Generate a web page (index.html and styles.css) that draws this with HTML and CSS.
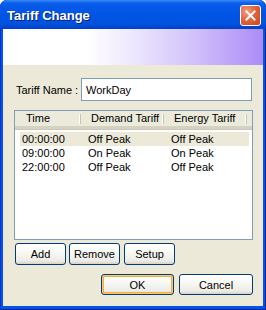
FILE: index.html
```html
<!DOCTYPE html>
<html lang="en">
<head>
  <meta charset="UTF-8" />
  <title>Tariff Change</title>
  <link rel="stylesheet" href="styles.css">
</head>
<body>
  <div class="window">
    <div class="titlebar">
      <span class="title">Tariff Change</span>
      <button class="close" aria-label="Close">
        <svg width="11" height="11" viewBox="0 0 11 11">
          <path d="M1.5 1.5 L9.5 9.5 M9.5 1.5 L1.5 9.5" stroke="#fff" stroke-width="2" stroke-linecap="square" fill="none"/>
        </svg>
      </button>
    </div>

    <div class="client">
      <div class="banner"></div>

      <div class="content">
        <div class="name-row">
          <label for="tariffName">Tariff Name :</label>
          <input type="text" id="tariffName" value="WorkDay" />
        </div>

        <div class="listview">
          <div class="lv-header">
            <div class="lv-col c1">Time</div>
            <div class="lv-col c2">Demand Tariff</div>
            <div class="lv-col c3">Energy Tariff</div>
          </div>
          <div class="lv-rows">
            <div class="lv-row selected">
              <span class="c1">00:00:00</span><span class="c2">Off Peak</span><span class="c3">Off Peak</span>
            </div>
            <div class="lv-row">
              <span class="c1">09:00:00</span><span class="c2">On Peak</span><span class="c3">On Peak</span>
            </div>
            <div class="lv-row">
              <span class="c1">22:00:00</span><span class="c2">Off Peak</span><span class="c3">Off Peak</span>
            </div>
          </div>
        </div>

        <div class="list-buttons">
          <button class="btn small">Add</button>
          <button class="btn small">Remove</button>
          <button class="btn small">Setup</button>
        </div>

        <div class="dialog-buttons">
          <button class="btn default">OK</button>
          <button class="btn cancel">Cancel</button>
        </div>
      </div>
    </div>
  </div>
</body>
</html>
```

FILE: styles.css
```css
body {
  margin: 0;
  padding: 0;
  font-family: 'Liberation Sans', Arial, sans-serif;
  font-size: 11px;
  color: #000;
  background: #fff;
}

.window {
  width: 266px;
  height: 310px;
  box-sizing: border-box;
  display: flex;
  flex-direction: column;
  background: #0553E2;
  border-radius: 7px 7px 0 0;
  overflow: hidden;
  box-shadow: inset 1px 0 0 #0831D9, inset -1px 0 0 #001EA0, inset 0 -1px 0 #001EA0;
}

.titlebar {
  height: 29px;
  flex: none;
  display: flex;
  align-items: center;
  justify-content: space-between;
  padding: 0 5px 0 7px;
  background: linear-gradient(#3B8AF7 0px, #0B5FEB 3px, #0558E8 8px, #0054E3 16px, #0152DE 24px, #0140C8 29px);
  border-radius: 7px 7px 0 0;
}

.title {
  color: #fff;
  font-weight: bold;
  font-size: 13px;
  text-shadow: 1px 1px 0 #0A1E7A;
  margin-top: 1px;
}

.close {
  width: 21px;
  height: 21px;
  padding: 0;
  margin-top: 1px;
  border: 1px solid #fff;
  border-radius: 3px;
  background: radial-gradient(circle at 30% 30%, #F29C7C 0%, #E2653F 45%, #CD4419 100%);
  display: flex;
  align-items: center;
  justify-content: center;
}

.client {
  flex: 1;
  margin: 0 3px 4px;
  background: #ECE9D8;
  display: flex;
  flex-direction: column;
}

.banner {
  height: 36px;
  flex: none;
  background: linear-gradient(to right, #fff 0%, #fff 32%, #EDE7FD 50%, #D3C4FA 72%, #AC8CF6 100%);
}

.content {
  padding: 13px 10px 0 11px;
}

.name-row {
  display: flex;
  align-items: center;
}

.name-row label {
  width: 65px;
  padding-left: 2px;
}

.name-row input {
  width: 171px;
  height: 23px;
  box-sizing: border-box;
  border: 1px solid #7F9DB9;
  padding: 0 4px;
  font-family: 'Liberation Sans', Arial, sans-serif;
  font-size: 11px;
  outline: none;
}

.listview {
  margin-top: 9px;
  height: 130px;
  box-sizing: border-box;
  border: 1px solid #7F9DB9;
  background: #fff;
}

.lv-header {
  display: flex;
  height: 18px;
  box-sizing: border-box;
  background: #EBEADB;
  border-bottom: 3px solid #D6D2C2;
  box-shadow: 0 1px 0 #CBC7B8;
}

.lv-col {
  box-sizing: border-box;
  padding-left: 10px;
  line-height: 15px;
  position: relative;
}

.lv-col::after {
  content: '';
  position: absolute;
  right: 0;
  top: 3px;
  height: 10px;
  width: 1px;
  background: #C7C5B2;
  box-shadow: -1px 0 0 #fff;
}

.lv-header .c1 { width: 66px; padding-left: 11px; }
.lv-header .c2 { width: 83px; }
.lv-header .c3 { width: 83px; }

.lv-rows {
  margin-top: 3px;
  padding-left: 5px;
  padding-right: 3px;
}

.lv-row {
  display: flex;
  height: 14px;
  line-height: 14px;
  padding-left: 2px;
}

.lv-row.selected {
  background: #ECE9D8;
}

.lv-row .c1 { width: 66px; }
.lv-row .c2 { width: 83px; }
.lv-row .c3 { width: 78px; }

.list-buttons {
  display: flex;
  gap: 3px;
  margin-top: 3px;
  padding-left: 1px;
}

.btn {
  height: 22px;
  box-sizing: border-box;
  padding: 0;
  border: 1px solid #003C74;
  border-radius: 3px;
  background: linear-gradient(#FFFFFF 0%, #F8F8F5 40%, #ECEBE6 85%, #D6D0C5 100%);
  font-family: 'Liberation Sans', Arial, sans-serif;
  font-size: 11px;
  color: #000;
}

.btn.small {
  width: 51px;
}

.btn.small + .btn.small + .btn.small {
  margin-left: 1px;
}

.dialog-buttons {
  display: flex;
  justify-content: flex-end;
  gap: 5px;
  margin-top: 9px;
}

.dialog-buttons .btn {
  height: 21px;
}

.btn.default {
  width: 73px;
  box-shadow: inset 0 0 0 1px #FBC873, inset 0 0 0 2px #F1AE47;
}

.btn.cancel {
  width: 74px;
}
```
